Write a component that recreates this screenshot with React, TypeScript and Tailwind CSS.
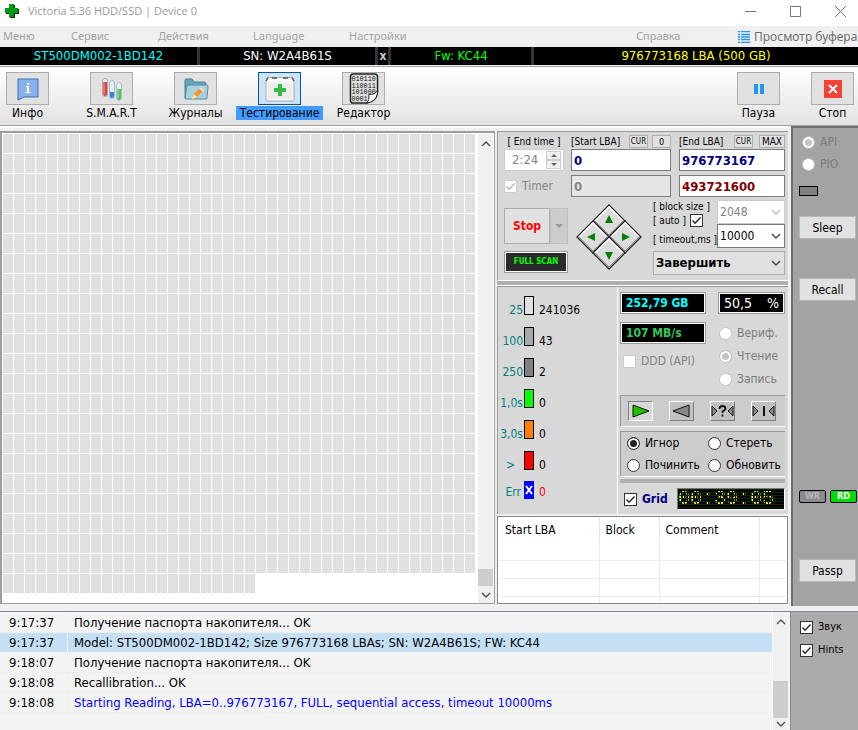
import { type ReactNode } from "react";
import clsx from "clsx";

const TOTAL_BLOCKS = 969;

const speedStats = [
  { label: "25", value: "241036", color: "bg-[#e0e0e0]" },
  { label: "100", value: "43", color: "bg-[#a8a8ac]" },
  { label: "250", value: "2", color: "bg-[#808080]" },
  { label: "1,0s", value: "0", color: "bg-[#00ff00]" },
  { label: "3,0s", value: "0", color: "bg-[#ff8000]" },
  { label: ">", value: "0", color: "bg-[#ff0000]" },
];

const log = [
  { time: "9:17:37", text: "Получение паспорта накопителя... OK" },
  {
    time: "9:17:37",
    text: "Model: ST500DM002-1BD142; Size 976773168 LBAs; SN: W2A4B61S; FW: KC44",
    selected: true,
  },
  { time: "9:18:07", text: "Получение паспорта накопителя... OK" },
  { time: "9:18:08", text: "Recallibration... OK" },
  {
    time: "9:18:08",
    text: "Starting Reading, LBA=0..976773167, FULL, sequential access, timeout 10000ms",
    link: true,
  },
];

function Chevron({ up, className }: { up?: boolean; className?: string }) {
  return (
    <svg viewBox="0 0 10 6" className={clsx("h-[6px] w-[10px]", className)} fill="none" aria-hidden="true">
      <path d={up ? "M1 5L5 1L9 5" : "M1 1L5 5L9 1"} stroke="currentColor" strokeWidth="1.4" />
    </svg>
  );
}

function Check({ children, disabled, checked, className }: {
  children?: ReactNode;
  disabled?: boolean;
  checked?: boolean;
  className?: string;
}) {
  return (
    <label className={clsx("flex items-center gap-[5px]", disabled && "text-[#838383]", className)}>
      <span className="relative flex h-[13px] w-[13px] shrink-0">
        <input
          type="checkbox"
          defaultChecked={checked}
          disabled={disabled}
          aria-label={children ? undefined : "auto"}
          className="peer h-[13px] w-[13px] appearance-none border border-[#333] bg-white disabled:border-[#ccc]"
        />
        <svg
          viewBox="0 0 13 13"
          className="pointer-events-none absolute inset-0 hidden text-[#222] peer-checked:block peer-disabled:text-[#b5b5b5]"
          fill="none"
          aria-hidden="true"
        >
          <path d="M2.5 6.5L5 9.3L10.5 3.5" stroke="currentColor" strokeWidth="1.3" />
        </svg>
      </span>
      {children}
    </label>
  );
}

function Radio({ name, children, disabled, checked }: {
  name: string;
  children: ReactNode;
  disabled?: boolean;
  checked?: boolean;
}) {
  return (
    <label className={clsx("flex items-center gap-[5px] whitespace-nowrap", disabled && "text-[#7c7c7c]")}>
      <input
        type="radio"
        name={name}
        defaultChecked={checked}
        disabled={disabled}
        className="h-[13px] w-[13px] shrink-0 appearance-none rounded-full border border-[#333] bg-white checked:bg-[#222] checked:shadow-[inset_0_0_0_2px_white] disabled:border-[#c4c4c4] disabled:checked:bg-[#c4c4c4]"
      />
      {children}
    </label>
  );
}

function ScrollBar({ thumb, foot = "h-[17px]" }: { thumb: string; foot?: string }) {
  return (
    <div className="flex w-[15px] shrink-0 flex-col items-center bg-[#f0f0f0] text-[#505050]">
      <button aria-label="Scroll up" className="flex h-[19px] w-full items-center justify-center">
        <Chevron up />
      </button>
      <div className="flex-1" />
      <div className={clsx("w-full bg-[#cdcdcd]", thumb)} />
      <button aria-label="Scroll down" className={clsx("flex w-full items-center justify-center", foot)}>
        <Chevron />
      </button>
    </div>
  );
}

function Tool({ label, active, children }: { label: string; active?: boolean; children: ReactNode }) {
  return (
    <button className="flex w-[43px] flex-col items-center gap-px">
      <span
        className={clsx(
          "flex h-[33px] w-[43px] items-center justify-center border",
          active ? "border-[#0a5299] bg-[#cce4f7]" : "border-[#adadad] bg-[#e1e1e1]",
        )}
      >
        {children}
      </span>
      <span className={clsx("px-1 text-[12px] leading-[14px] whitespace-nowrap", active && "bg-[#429cff]")}>
        {label}
      </span>
    </button>
  );
}

function InfoIcon() {
  return (
    <svg viewBox="0 0 22 24" className="h-6 w-[22px]" aria-hidden="true">
      <path d="M1 2H21V20H7L1 23Z" fill="#86b2ee" stroke="#3f6fae" />
      <rect x="10" y="6" width="2" height="2" fill="#fff" />
      <path d="M9 9H12V15H14V16H8V15H10V10H9Z" fill="#fff" />
    </svg>
  );
}

function TubesIcon() {
  return (
    <svg viewBox="0 0 22 26" className="h-[26px] w-[22px]" aria-hidden="true">
      <rect x="1.5" y="2.5" width="5" height="18" rx="2.5" fill="#e8eef5" stroke="#b9a5a5" />
      <path d="M2 6H6V18A2 2 0 0 1 2 18Z" fill="#d9453c" />
      <path d="M3 6V18" stroke="#f5a39b" />
      <rect x="8.5" y="4.5" width="5" height="18" rx="2.5" fill="#e8eef9" stroke="#a9b9d5" />
      <path d="M9 16H13V20A2 2 0 0 1 9 20Z" fill="#2f86e0" />
      <rect x="15.5" y="6.5" width="5" height="18" rx="2.5" fill="#e8f5ee" stroke="#a9bfc5" />
      <path d="M16 13H20V22A2 2 0 0 1 16 22Z" fill="#52c252" />
      <path d="M17 13V22" stroke="#a8e8a8" />
    </svg>
  );
}

function FolderIcon() {
  return (
    <svg viewBox="0 0 26 24" className="h-6 w-[26px]" aria-hidden="true">
      <path d="M2 21V3Q2 2 3 2H9L11 5H21Q23 5 23 7V21Z" fill="#66a5b8" stroke="#3f7f95" />
      <path d="M5 8H24Q25 8 25 9L24 21Q24 22 23 22H3Q2 22 2 21L4 9Z" fill="#a9d0dc" stroke="#568ea2" />
      <path d="M9 22L11 17L17 11L20 14L14 20Z" fill="#f5961e" />
      <path d="M9 22L11 17L14 20Z" fill="#f8e3b8" />
      <path d="M16 11L18 10L21 13L20 15Z" fill="#dfe3ea" />
    </svg>
  );
}

function KitIcon() {
  return (
    <svg viewBox="0 0 30 26" className="h-[26px] w-[30px]" aria-hidden="true">
      <path d="M3 1.5H27L29 5V23Q29 25 27 25H3Q1 25 1 23V5Z" fill="#f6f6f6" stroke="#aaa" />
      <path d="M1 5L3 1.5M27 1.5L29 5M7 2H12M18 2H23" stroke="#555" strokeWidth="1.5" />
      <rect x="3" y="7" width="24" height="16" fill="#ededed" />
      <path d="M13 8H17V12H21V16H17V20H13V16H9V12H13Z" fill="#35bb45" />
    </svg>
  );
}

function BinaryIcon() {
  return (
    <svg viewBox="0 0 30 32" className="h-[31px] w-[30px] shrink-0" aria-hidden="true">
      <path d="M4 1H26Q29 1 29 4V20Q28 29 18 31H4Q1 31 1 28V4Q1 1 4 1Z" fill="#dedede" stroke="#222" strokeWidth="1.5" />
      <g fontSize="7" fontFamily="Liberation Mono, monospace" fill="#111">
        <text x="2" y="8">010110</text>
        <text x="2" y="15">110011</text>
        <text x="2" y="22">101000</text>
        <text x="2" y="29">0001</text>
      </g>
      <path d="M29 18V21Q27 30 18 31Q21 28 20 22Q26 23 29 18Z" fill="#fff" stroke="#222" />
    </svg>
  );
}

function DirectionPad() {
  return (
    <svg viewBox="0 0 68 68" className="h-[68px] w-[68px]" role="group" aria-label="Direction">
      {[
        [34, 18, "M30 20L34 12L38 20Z"],
        [18, 34, "M20 30L12 34L20 38Z"],
        [50, 34, "M47 30L55 34L47 38Z"],
        [34, 50, "M30 49L34 57L38 49Z"],
      ].map(([x, y, arrow]) => (
        <g key={arrow}>
          <path
            d={`M${x} ${Number(y) - 16}l16 16l-16 16l-16 -16Z`}
            fill="#dcdcdc"
            stroke="#222"
            strokeWidth="1.3"
          />
          <path
            d={`M${Number(x) - 14} ${y}l14 -14l14 14`}
            fill="none"
            stroke="#fff"
            strokeWidth="1.3"
          />
          <path
            d={`M${Number(x) - 14} ${y}l14 14l14 -14`}
            fill="none"
            stroke="#8a8a8a"
          />
          <path d={String(arrow)} fill="#008000" />
        </g>
      ))}
    </svg>
  );
}

function Field({ label, value, className }: { label: string; value: string; className?: string }) {
  return (
    <input
      aria-label={label}
      defaultValue={value}
      className={clsx("h-[22px] w-full min-w-0 border border-[#7a7a7a] px-[2px] text-[13px] font-bold", className)}
    />
  );
}

function MiniButton({ children, className }: { children: ReactNode; className: string }) {
  return (
    <button className={clsx("flex h-[13px] shrink-0 items-center justify-center border border-[#adadad] bg-[#e1e1e1]", className)}>
      {children}
    </button>
  );
}

function Select({ label, value, disabled, className }: {
  label: string;
  value: string;
  disabled?: boolean;
  className?: string;
}) {
  return (
    <span className="relative flex">
      <select
        aria-label={label}
        disabled={disabled}
        className={clsx("h-6 w-full appearance-none border px-[2px] disabled:text-[#838383] disabled:opacity-100", className)}
      >
        <option>{value}</option>
      </select>
      <Chevron
        className={clsx("pointer-events-none absolute top-[9px] right-[4px]", disabled ? "text-[#bbb]" : "text-[#444]")}
      />
    </span>
  );
}

function Readout({ children, className }: { children: ReactNode; className?: string }) {
  return (
    <div className="border border-[#999] bg-white p-px">
      <div className={clsx("h-[18px] bg-black px-1 leading-[18px] whitespace-nowrap", className)}>{children}</div>
    </div>
  );
}

function PlayButton({ label, pressed, children }: { label: string; pressed?: boolean; children: ReactNode }) {
  return (
    <button
      aria-label={label}
      className={clsx(
        "h-5 w-[25px] border",
        pressed
          ? "border-t-[#808080] border-r-white border-b-white border-l-[#808080] bg-[#d8d8d8]"
          : "border-t-white border-r-[#808080] border-b-[#808080] border-l-white bg-[#c0c0c0]",
      )}
    >
      <svg viewBox="0 0 23 18" className="h-[18px] w-[23px]" stroke="#111" aria-hidden="true">
        {children}
      </svg>
    </button>
  );
}

function SideButton({ children, className }: { children: ReactNode; className?: string }) {
  return (
    <button className={clsx("mr-[2px] h-[23px] border border-[#b8b8b8] bg-[#e1e1e1]", className)}>{children}</button>
  );
}

function Header() {
  return (
    <header>
      <div className="flex h-[26px] items-center bg-white font-['Open_Sans',sans-serif] text-[11px] text-[#999]">
        <svg viewBox="0 0 16 16" className="mr-2 mb-1 ml-1 h-4 w-4" aria-hidden="true">
          <path d="M6 2H11V6H15V11H11V15H6V11H2V6H6Z" fill="#052c05" />
          <path d="M5 1H10V5H14V10H10V14H5V10H1V5H5Z" fill="#009a10" />
        </svg>
        <h1 className="mb-1 flex-1">Victoria 5.36 HDD/SSD | Device 0</h1>
        <div className="mb-1 flex gap-[34px] pr-3">
          <button aria-label="Minimize">
            <svg viewBox="0 0 11 11" className="h-[11px] w-[11px]" stroke="#777"><path d="M0 5.5H11" /></svg>
          </button>
          <button aria-label="Maximize">
            <svg viewBox="0 0 11 11" className="h-[11px] w-[11px]" stroke="#777" fill="none"><path d="M.5 .5H10.5V10.5H.5Z" /></svg>
          </button>
          <button aria-label="Close">
            <svg viewBox="0 0 11 11" className="h-[11px] w-[11px]" stroke="#777"><path d="M0 0L11 11M11 0L0 11" /></svg>
          </button>
        </div>
      </div>
      <nav className="grid h-[21px] grid-cols-[68px_87px_95px_96px_1fr_102px_120px] items-center bg-[#f0f0f0] pl-[3px] font-['Noto_Sans',sans-serif] text-[11px] text-[#a3a3a3]">
        <button className="text-left">Меню</button>
        <button className="text-left">Сервис</button>
        <button className="text-left">Действия</button>
        <button className="text-left">Language</button>
        <button className="text-left">Настройки</button>
        <button className="text-left">Справка</button>
        <button className="flex items-center gap-1 text-[12px] whitespace-nowrap text-[#6d6d6d]">
          <svg viewBox="0 0 12 12" className="h-3 w-3 shrink-0" stroke="#2196f3" aria-hidden="true">
            <path d="M0 .5H2M3 .5H12M0 3.5H2M3 3.5H12M0 6H2M3 6H12M0 8.5H2M3 8.5H12M0 11.5H2M3 11.5H12" strokeWidth="1.4" />
          </svg>
          Просмотр буфера
        </button>
      </nav>
      <div className="grid h-[18px] grid-cols-[197px_175px_10px_140px_1fr] gap-[3px] bg-[#333] text-center text-[13px] leading-[18px]">
        <span className="bg-black text-[#00ffff]">ST500DM002-1BD142</span>
        <span className="bg-black text-white">SN: W2A4B61S</span>
        <button aria-label="Close drive" className="bg-black text-[12px] font-bold text-[#ccc]">x</button>
        <span className="bg-black text-[#00ff00]">Fw: KC44</span>
        <span className="bg-black text-[#ffff00]">976773168 LBA (500 GB)</span>
      </div>
    </header>
  );
}

function Toolbar() {
  return (
    <div className="mt-px flex h-[60px] items-start gap-[41px] border-y border-[#a0a0a0] bg-linear-to-b from-white to-[#e2e2e2] pt-[5px] pr-1 pl-[6px]">
      <Tool label="Инфо"><InfoIcon /></Tool>
      <Tool label="S.M.A.R.T"><TubesIcon /></Tool>
      <Tool label="Журналы"><FolderIcon /></Tool>
      <Tool label="Тестирование" active><KitIcon /></Tool>
      <Tool label="Редактор"><BinaryIcon /></Tool>
      <div className="ml-auto flex gap-[31px]">
        <Tool label="Пауза">
          <svg viewBox="0 0 10 10" className="h-[10px] w-[10px]" fill="#2196f3"><path d="M0 0H4V10H0ZM6 0H10V10H6Z" /></svg>
        </Tool>
        <Tool label="Стоп">
          <svg viewBox="0 0 18 18" className="h-[18px] w-[18px]">
            <rect width="18" height="18" fill="#f44336" />
            <path d="M5 5L13 13M13 5L5 13" stroke="#fff" strokeWidth="2" />
          </svg>
        </Tool>
      </div>
    </div>
  );
}

function ScanSettings() {
  return (
    <section className="h-[150px] border-t border-b border-l border-[#999] border-b-white bg-[#d8d8d8] pt-[3px] pr-[3px] pl-[6px] text-[12px]">
      <div className="grid grid-cols-[60px_100px_1fr] gap-x-[7px]">
        <div>
          <p className="h-[14px] text-center text-[10px] leading-[14px] whitespace-nowrap">[ End time ]</p>
          <div className="flex h-[22px] items-center justify-between border border-[#ccc] bg-white pr-[2px] pl-[7px] text-[#838383]">
            <input aria-label="End time" defaultValue="2:24" className="w-[32px] min-w-0 text-[13px]" />
            <div className="flex flex-col">
              <button aria-label="Later" className="flex h-[9px] w-[15px] items-center justify-center border border-[#ccc] bg-[#f0f0f0]">
                <svg viewBox="0 0 6 3" className="h-[3px] w-[6px]" fill="#666"><path d="M0 3L3 0L6 3Z" /></svg>
              </button>
              <button aria-label="Earlier" className="flex h-[9px] w-[15px] items-center justify-center border border-[#ccc] bg-[#f0f0f0]">
                <svg viewBox="0 0 6 3" className="h-[3px] w-[6px]" fill="#666"><path d="M0 0L3 3L6 0Z" /></svg>
              </button>
            </div>
          </div>
          <Check checked disabled className="mt-[6px]">Timer</Check>
        </div>
        <div>
          <div className="flex h-[14px] items-start gap-1 text-[10px] leading-[14px] whitespace-nowrap">
            <span className="flex-1">[Start LBA]</span>
            <MiniButton className="w-[19px] text-[8px]">CUR</MiniButton>
            <MiniButton className="w-[19px] text-[9px]">0</MiniButton>
          </div>
          <Field label="Start LBA" value="0" className="bg-white text-[#000080]" />
          <Field label="Current LBA" value="0" className="mt-1 bg-[#e6e6e6] text-[#838383]" />
        </div>
        <div className="pl-px">
          <div className="flex h-[14px] items-start gap-[6px] text-[10px] leading-[14px] whitespace-nowrap">
            <span className="flex-1">[End LBA]</span>
            <MiniButton className="w-[19px] text-[8px]">CUR</MiniButton>
            <MiniButton className="w-[26px] text-[10px]">MAX</MiniButton>
          </div>
          <Field label="End LBA" value="976773167" className="bg-white text-[#000080]" />
          <Field label="Last LBA" value="493721600" className="mt-1 bg-white text-[#800000]" />
        </div>
      </div>

      <div className="mt-[3px] grid grid-cols-[64px_68px_1fr] gap-x-[7px]">
        <div className="flex flex-col gap-[7px] pt-2">
          <div className="flex h-9">
            <button className="flex-1 border border-[#adadad] bg-[#e1e1e1] text-[12px] font-bold text-[#ff0000]">Stop</button>
            <button aria-label="Stop options" className="flex w-[18px] items-center justify-center border border-[#bfbfbf] bg-[#ccc]">
              <svg viewBox="0 0 8 4" className="h-1 w-2" fill="#999"><path d="M0 0L4 4L8 0Z" /></svg>
            </button>
          </div>
          <div className="border border-[#999] bg-white p-px">
            <button className="block h-[18px] w-full bg-[#2a2a2a] text-[8px] font-bold whitespace-nowrap text-[#00ff00]">FULL SCAN</button>
          </div>
        </div>
        <div className="pt-[3px]"><DirectionPad /></div>
        <div className="pl-[3px]">
          <div className="grid grid-cols-[1fr_68px] text-[10px] whitespace-nowrap">
            <div>
              <p className="h-[13px] leading-[13px]">[ block size ]</p>
              <div className="flex items-center gap-1">[ auto ] <Check checked /></div>
              <p className="mt-1">[ timeout,ms ]</p>
            </div>
            <div className="text-[12px]">
              <Select label="block size" value="2048" disabled className="border-[#ccc] bg-white" />
              <Select label="timeout, ms" value="10000" className="border-[#7a7a7a] bg-white" />
            </div>
          </div>
          <div className="mt-[3px] text-[13px] font-bold">
            <Select label="When done" value="Завершить" className="border-[#adadad] bg-[#e1e1e1]" />
          </div>
        </div>
      </div>
    </section>
  );
}

function SpeedStats() {
  return (
    <ul className="flex w-[121px] shrink-0 flex-col gap-3 border-t border-r border-l border-[#999] border-r-white pt-[9px] text-[12px]">
      {speedStats.map((s) => (
        <li key={s.label} className="flex h-[19px] items-center gap-px">
          <span className={clsx("mt-2 w-[25px] text-right text-[#008080]", s.label === ">" && "pr-2")}>{s.label}</span>
          <span className={clsx("h-[19px] w-[10px] border border-black", s.color)} />
          <span className="mt-2 pl-1">{s.value}</span>
        </li>
      ))}
      <li className="-mt-px flex h-[18px] items-center gap-px">
        <span className="mt-1 w-[25px] pr-[2px] text-right text-[#008080]">Err</span>
        <span className="flex h-[18px] w-[10px] items-center justify-center bg-[#0000ff]">
          <svg viewBox="0 0 10 10" className="h-[10px] w-[10px]"><path d="M2 1L8 9M8 1L2 9" stroke="#fff" strokeWidth="2" /></svg>
        </span>
        <span className="mt-1 pl-1 text-[#ff0000]">0</span>
      </li>
    </ul>
  );
}

function ScanControls() {
  return (
    <div className="min-w-0 flex-1 border-t border-[#999] pt-[5px] pr-[3px] pl-[2px] text-[12px]">
      <div className="grid grid-cols-[86px_1fr] gap-x-3 gap-y-2">
        <Readout className="font-bold text-[#00ffff]">252,79 GB</Readout>
        <Readout className="flex justify-between text-[14px] text-white"><span>50,5</span><span>%</span></Readout>
        <div className="flex flex-col gap-2">
          <Readout className="font-bold text-[#34c759]">107 MB/s</Readout>
          <Check disabled className="ml-[3px] whitespace-nowrap">DDD (API)</Check>
        </div>
        <div className="flex flex-col gap-[7px] pt-[3px] pl-px leading-4">
          <Radio name="mode" disabled>Вериф.</Radio>
          <Radio name="mode" disabled checked>Чтение</Radio>
          <Radio name="mode" disabled>Запись</Radio>
        </div>
      </div>

      <div className="mt-2 flex h-8 items-center justify-between border-t border-b border-l border-[#999] border-b-white bg-[#ccc] pr-[9px] pl-[7px]">
        <PlayButton label="Forward" pressed><path d="M4 3L20 9L4 15Z" fill="#20c000" /></PlayButton>
        <PlayButton label="Backward"><path d="M19 3L3 9L19 15Z" fill="#888" /></PlayButton>
        <PlayButton label="Random">
          <path d="M1 4L6 9L1 14ZM22 4L17 9L22 14Z" fill="#888" />
          <path d="M8.500 7Q8.500 4 11.500 4Q14.500 4 14.500 7Q14 8 11.500 9.500V11M11.500 12.500V14.500" fill="none" strokeWidth="1.8" />
        </PlayButton>
        <PlayButton label="Butterfly">
          <path d="M1 4L6 9L1 14ZM22 4L17 9L22 14Z" fill="#888" />
          <path d="M12 4V14" strokeWidth="2" />
        </PlayButton>
      </div>

      <div className="mt-1 grid h-[46px] grid-cols-[81px_1fr] items-center border-t border-b border-l border-[#999] border-b-white bg-[#ccc] pl-[6px]">
        <Radio name="action" checked>Игнор</Radio>
        <Radio name="action">Стереть</Radio>
        <Radio name="action">Починить</Radio>
        <Radio name="action">Обновить</Radio>
      </div>
      <div className="mt-[2px] h-1 bg-[#b0b0b0]" />

      <div className="mt-[5px] flex items-center justify-between pl-1">
        <Check checked className="font-bold text-[#000080]">Grid</Check>
        <div className="relative h-[22px] w-[108px] overflow-hidden border border-t-[#777] border-r-white border-b-white border-l-[#777] bg-black font-['Liberation_Mono',monospace] text-[20px] leading-[20px] text-[#ffff30]">
          00:39:05
          <div className="absolute inset-0 bg-[linear-gradient(#0c260c_1px,transparent_1px),linear-gradient(90deg,#000_1px,transparent_1px)] bg-size-[3px_3px]" />
        </div>
      </div>
    </div>
  );
}

function DefectTable() {
  return (
    <div className="mt-[2px] h-[88px] overflow-hidden border border-[#828790] bg-white px-px">
      <table className="w-full table-fixed border-collapse text-left text-[12px]">
        <thead>
          <tr className="h-[25px]">
            <th className="w-[100px] border-r border-[#e5e5e5] pl-[6px] font-normal">Start LBA</th>
            <th className="w-[60px] border-r border-[#e5e5e5] pl-[6px] font-normal">Block</th>
            <th className="w-[100px] border-r border-[#e5e5e5] pl-[6px] font-normal">Comment</th>
            <th />
          </tr>
        </thead>
        <tbody>
          {[1, 2, 3, 4].map((row) => (
            <tr key={row} className="h-[18px] border-b border-[#ececec]">
              <td className="border-r border-[#ececec]" />
              <td className="border-r border-[#ececec]" />
              <td className="border-r border-[#ececec]" />
              <td />
            </tr>
          ))}
        </tbody>
      </table>
    </div>
  );
}

function Sidebar() {
  return (
    <aside className="flex w-[67px] shrink-0 flex-col border-t-2 border-l-2 border-[#6e6e6e] bg-[#a3a3a3] pl-[6px] text-[12px]">
      <div className="mt-[6px] flex flex-col gap-[6px] pl-[3px] leading-4">
        <Radio name="io" disabled checked>API</Radio>
        <Radio name="io" disabled>PIO</Radio>
      </div>
      <div className="mt-[14px] h-[10px] w-[19px] border border-black bg-[#808080]" />
      <SideButton className="mt-5">Sleep</SideButton>
      <SideButton className="mt-[39px]">Recall</SideButton>
      <div className="mt-auto flex justify-between pr-px pb-[56px] text-[9px] leading-[11px] font-bold">
        <span className="w-[27px] rounded-[2px] border border-black bg-[#8a8a90] text-center text-[#b5b5b5]">WR</span>
        <span className="w-[27px] rounded-[2px] border border-black bg-[#00dc00] text-center text-white">RD</span>
      </div>
      <SideButton className="mb-6">Passp</SideButton>
    </aside>
  );
}

function LogPanel() {
  return (
    <div className="mt-[5px] flex min-h-[118px] flex-1 border-t border-[#828790] text-[13px]">
      <div className="flex min-w-0 flex-1 border-r border-[#828790] bg-[#f3f3f3] pr-[2px]">
        <ul className="min-w-0 flex-1 border-r border-white pt-px">
          {log.map((row, i) => (
            <li
              key={i}
              className={clsx(
                "grid h-5 grid-cols-[68px_1fr] border-b border-[#efefef] leading-[19px] whitespace-nowrap",
                row.selected && "bg-[#c5dff5]",
                row.link && "text-[#0000ff]",
              )}
            >
              <time className="border-r border-[#efefef] pl-[9px] text-black">{row.time}</time>
              <span className="pl-[6px]">{row.text}</span>
            </li>
          ))}
        </ul>
        <ScrollBar thumb="h-[37px]" foot="h-3" />
      </div>
      <div className="flex w-[67px] shrink-0 flex-col gap-[7px] bg-[#ababab] pt-[7px] pl-[9px] text-[11px] leading-4">
        <Check checked>Звук</Check>
        <Check checked>Hints</Check>
      </div>
    </div>
  );
}

export default function App() {
  return (
    <div className="flex min-h-screen flex-col bg-[#f0f0f0] font-['DejaVu_Sans_Condensed','DejaVu_Sans',sans-serif] text-black">
      <Header />
      <Toolbar />
      <main className="flex gap-[3px]">
        <div className="flex min-w-0 flex-1 gap-[2px] border-t-2 border-white pt-[3px] pb-[2px]">
          <div className="flex min-w-0 flex-1 justify-between border-2 border-r border-b border-[#9d9d9d] bg-white pt-px pr-px pl-px">
            <div className="grid flex-1 auto-rows-[19px] grid-cols-[repeat(auto-fill,10px)] content-start gap-px">
              {Array.from({ length: TOTAL_BLOCKS }, (_, i) => (
                <div key={i} className="bg-[#e0e0e0]" />
              ))}
            </div>
            <ScrollBar thumb="h-[17px]" />
          </div>
          <div className="w-[291px] shrink-0">
            <ScanSettings />
            <div className="h-[5px] border-b border-white bg-[#b0b0b0]" />
            <div className="flex h-[228px] bg-[#d8d8d8]">
              <SpeedStats />
              <ScanControls />
            </div>
            <DefectTable />
          </div>
        </div>
        <Sidebar />
      </main>
      <LogPanel />
    </div>
  );
}
